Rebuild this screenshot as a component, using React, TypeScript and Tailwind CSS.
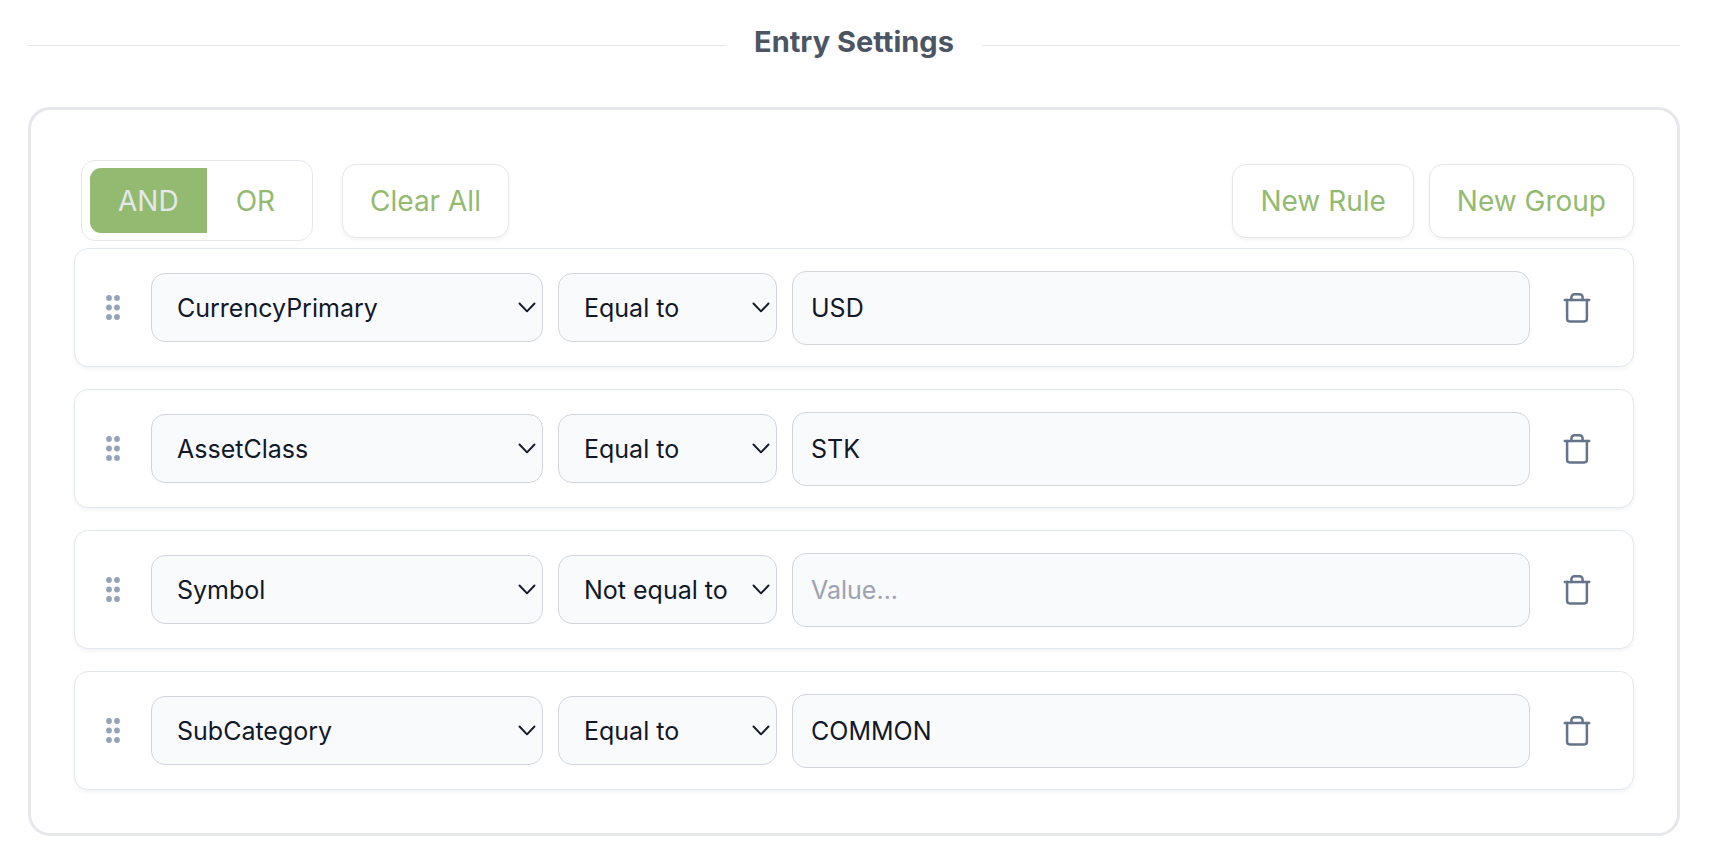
import { useState } from "react";

type Rule = { id: number; field: string; operator: string; value: string };

const FIELDS = ["CurrencyPrimary", "AssetClass", "Symbol", "SubCategory"];
const OPERATORS = ["Equal to", "Not equal to"];

const INITIAL_RULES: Rule[] = [
  { id: 1, field: "CurrencyPrimary", operator: "Equal to", value: "USD" },
  { id: 2, field: "AssetClass", operator: "Equal to", value: "STK" },
  { id: 3, field: "Symbol", operator: "Not equal to", value: "" },
  { id: 4, field: "SubCategory", operator: "Equal to", value: "COMMON" },
];

function GripIcon() {
  return (
    <svg width="14" height="25" viewBox="0 0 14 25" fill="currentColor" aria-hidden="true">
      {[3, 12.5, 22].map((y) => (
        <g key={y}>
          <circle cx="3" cy={y} r="2.9" />
          <circle cx="11" cy={y} r="2.9" />
        </g>
      ))}
    </svg>
  );
}

function TrashIcon() {
  return (
    <svg
      width="28"
      height="32"
      viewBox="0 0 28 32"
      fill="none"
      stroke="currentColor"
      strokeWidth="2.5"
      strokeLinecap="round"
      strokeLinejoin="round"
      aria-hidden="true"
    >
      <path d="M1.800 8h24.400" />
      <path d="M4.100 8v18.800a2.600 2.600 0 0 0 2.600 2.600h14.600a2.600 2.600 0 0 0 2.600-2.600V8" />
      <path d="M8.400 8V5.200A3 3 0 0 1 11.400 2.200h5.200a3 3 0 0 1 3 3V8" />
    </svg>
  );
}

function Select({
  label,
  value,
  options,
  onChange,
  className,
}: {
  label: string;
  value: string;
  options: string[];
  onChange: (v: string) => void;
  className: string;
}) {
  return (
    <div className={`grid shrink-0 items-center ${className}`}>
      <select
        aria-label={label}
        value={value}
        onChange={(e) => onChange(e.target.value)}
        className="col-start-1 row-start-1 h-[69px] w-full appearance-none rounded-[14px] border border-[#d1d5db] bg-[#f9fafb] pt-[2px] pr-8 pl-[25px] text-[25px] text-[#111827]"
      >
        {options.map((o) => (
          <option key={o}>{o}</option>
        ))}
      </select>
      <svg
        width="18"
        height="12"
        viewBox="0 0 18 12"
        fill="none"
        stroke="currentColor"
        strokeWidth="1.900"
        strokeLinecap="round"
        strokeLinejoin="round"
        aria-hidden="true"
        className="pointer-events-none col-start-1 row-start-1 mr-[7px] justify-self-end text-[#111827]"
      >
        <path d="M1.500 1.500 9 9.300l7.500-7.800" />
      </svg>
    </div>
  );
}

function ActionButton({ children, onClick }: { children: string; onClick: () => void }) {
  return (
    <button
      type="button"
      onClick={onClick}
      className="h-[74px] rounded-[14px] border border-[#e5e7eb] bg-white px-[27px] text-[28px] text-[#92ba70] shadow-[0_2px_4px_rgba(0,0,0,0.05)]"
    >
      {children}
    </button>
  );
}

export default function App() {
  const [combinator, setCombinator] = useState("AND");
  const [rules, setRules] = useState<Rule[]>(INITIAL_RULES);

  const update = (id: number, patch: Partial<Rule>) =>
    setRules(rules.map((r) => (r.id === id ? { ...r, ...patch } : r)));
  const addRule = () =>
    setRules([...rules, { id: Date.now(), field: FIELDS[0], operator: OPERATORS[0], value: "" }]);

  return (
    <main className="min-h-screen bg-white pt-[22px] pr-9 pb-6 pl-7 font-['Inter',sans-serif]">
      <div className="flex items-center gap-7">
        <div className="mt-[6px] h-px flex-1 bg-[#e5e7eb]" />
        <h1 className="text-[29px] leading-10 font-bold text-[#4b5563]">Entry Settings</h1>
        <div className="mt-[6px] h-px flex-1 bg-[#e5e7eb]" />
      </div>

      <section className="mt-[45px] rounded-[22px] border-3 border-[#e5e7eb] px-[43px] pt-[50px] pb-[43px]">
        <div className="flex items-center justify-between pb-[7px] pl-[7px]">
          <div className="flex items-center gap-[29px]">
            <div
              role="group"
              aria-label="Combinator"
              className="flex overflow-hidden rounded-[14px] border border-[#e5e7eb] px-2 py-[7px]"
            >
              {["AND", "OR"].map((c) => (
                <button
                  key={c}
                  type="button"
                  aria-pressed={combinator === c}
                  onClick={() => setCombinator(c)}
                  className={`h-[65px] px-7 text-[28px] first:rounded-l-[11px] last:rounded-r-[11px] last:px-[29px] ${
                    combinator === c ? "bg-[#92ba70] text-[#e5e7eb]" : "text-[#92ba70]"
                  }`}
                >
                  {c}
                </button>
              ))}
            </div>
            <ActionButton onClick={() => setRules([])}>Clear All</ActionButton>
          </div>
          <div className="flex gap-[15px]">
            <ActionButton onClick={addRule}>New Rule</ActionButton>
            <ActionButton onClick={addRule}>New Group</ActionButton>
          </div>
        </div>

        <ul className="flex flex-col gap-[22px]">
          {rules.map((rule) => (
            <li
              key={rule.id}
              className="flex h-[119px] items-center rounded-[14px] border border-[#e2e8f0] bg-white pr-[42px] pl-[31px] shadow-[0_2px_4px_rgba(0,0,0,0.05)]"
            >
              <button type="button" aria-label="Drag rule" className="mr-[31px] cursor-grab text-[#94a3b8]">
                <GripIcon />
              </button>
              <div className="flex min-w-0 flex-1 items-center gap-[15px]">
                <Select
                  label="Field"
                  value={rule.field}
                  options={FIELDS}
                  onChange={(field) => update(rule.id, { field })}
                  className="w-[392px]"
                />
                <Select
                  label="Operator"
                  value={rule.operator}
                  options={OPERATORS}
                  onChange={(operator) => update(rule.id, { operator })}
                  className="w-[219px]"
                />
                <input
                  type="text"
                  aria-label="Value"
                  placeholder="Value..."
                  value={rule.value}
                  onChange={(e) => update(rule.id, { value: e.target.value })}
                  className="h-[74px] min-w-0 flex-1 rounded-[14px] border border-[#d1d5db] bg-[#f9fafb] px-[18px] text-[25px] text-[#111827] placeholder:text-[#9ca3af]"
                />
              </div>
              <button type="button" aria-label="Delete rule" className="ml-[33px] text-[#64748b]">
                <TrashIcon />
              </button>
            </li>
          ))}
        </ul>
      </section>
    </main>
  );
}
